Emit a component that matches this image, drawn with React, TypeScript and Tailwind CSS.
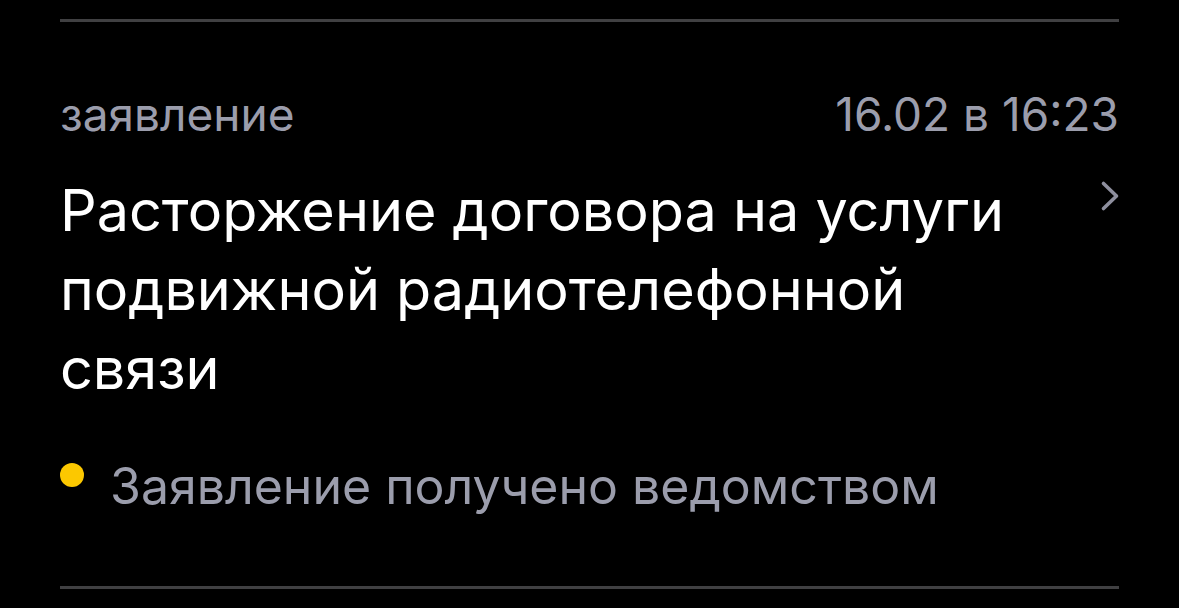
export default function App() {
  return (
    <div className="h-[608px] w-[1179px] overflow-hidden bg-black font-['Inter','Noto_Sans',sans-serif]">
      <div className="mx-[60px] pt-[19px]">
        <div className="h-[3px] bg-[#404042]" />
        <div className="flex items-baseline justify-between pt-[69px] text-[46px] leading-none text-[#9b9dac]">
          <span>заявление</span>
          <span>16.02 в 16:23</span>
        </div>
        <div className="flex items-start justify-between pt-[34px]">
          <h1 className="w-[980px] text-[57.5px] leading-[79px] text-white">
            Расторжение договора на услуги подвижной радиотелефонной связи
          </h1>
          <svg className="mr-[-1px] mt-[9px] h-[32px] w-[20px]" viewBox="0 0 20 32" fill="none">
            <path d="M3.5 3.5l13 12.5-13 12.5" stroke="#8e8f9e" strokeWidth="3.6" strokeLinecap="round" strokeLinejoin="round" />
          </svg>
        </div>
        <div className="flex items-start gap-[26px] pt-[46px]">
          <span className="mt-[9px] h-[24px] w-[24px] shrink-0 rounded-full bg-[#fcc800]" />
          <span className="text-[50px] leading-[64px] text-[#9b9dac]">Заявление получено ведомством</span>
        </div>
        <div className="mt-[68px] h-[3px] bg-[#404042]" />
      </div>
    </div>
  );
}
